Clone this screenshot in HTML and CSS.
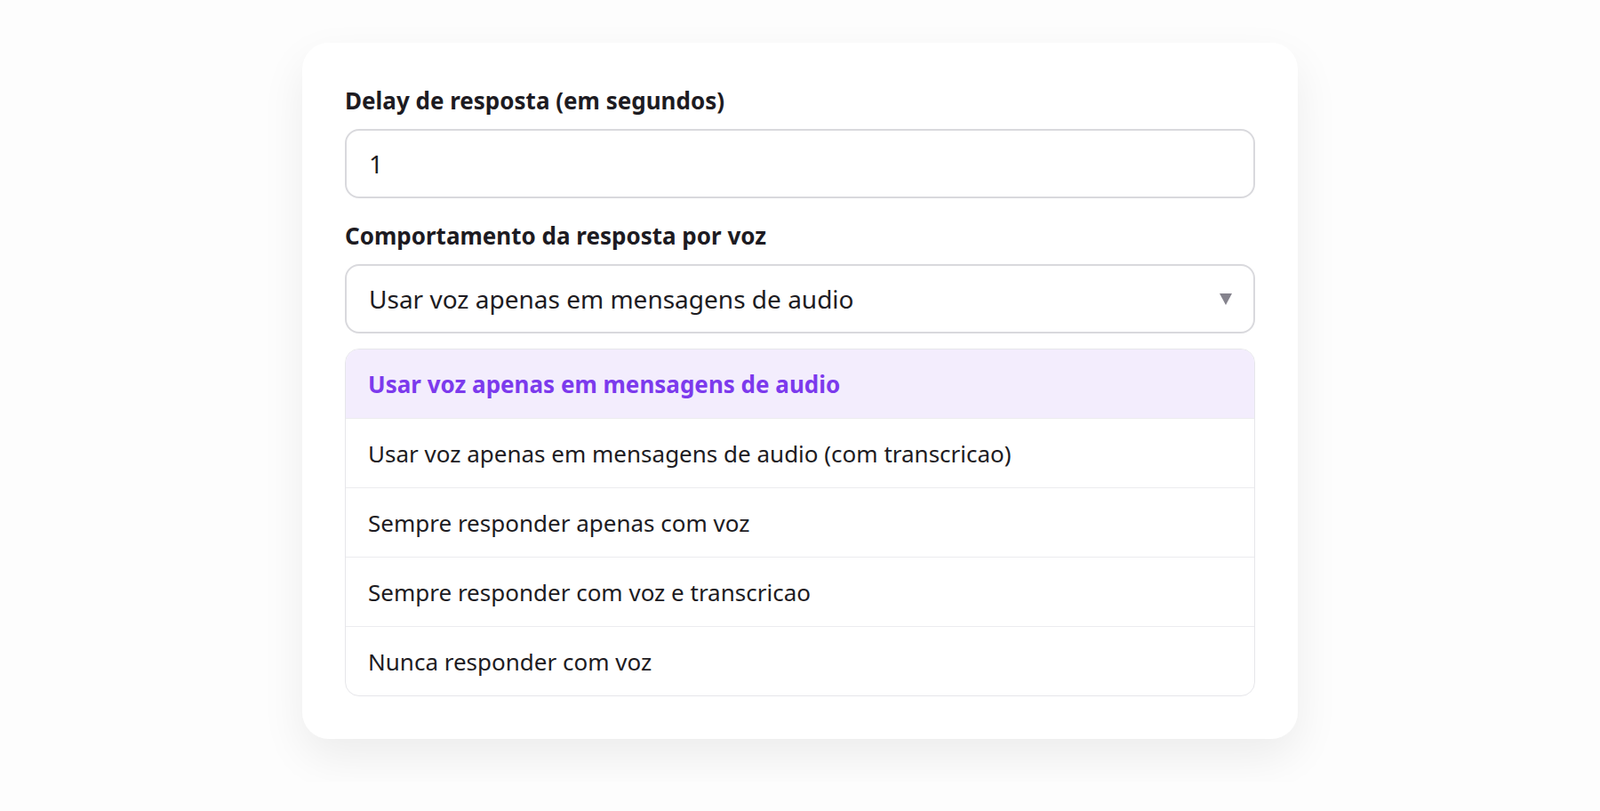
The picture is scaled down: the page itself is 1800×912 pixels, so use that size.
FILE: index.html
```html
<!DOCTYPE html>
<html>
<head>
    <title>Configurações de voz</title>
    <link rel="stylesheet" href="styles.css">
</head>
<body>
    <div class="card">
        <div class="field">
            <label class="field-label" for="delay">Delay de resposta (em segundos)</label>
            <input id="delay" class="text-input" type="text" value="1">
        </div>

        <div class="field">
            <div class="field-label">Comportamento da resposta por voz</div>
            <div class="select-box">
                <span>Usar voz apenas em mensagens de audio</span>
                <svg class="arrow" width="14" height="13" viewBox="0 0 14 13">
                    <path d="M0 0 H14 L7 13 Z" fill="#85838d"/>
                </svg>
            </div>
            <ul class="options">
                <li class="option selected">Usar voz apenas em mensagens de audio</li>
                <li class="option">Usar voz apenas em mensagens de audio (com transcricao)</li>
                <li class="option">Sempre responder apenas com voz</li>
                <li class="option">Sempre responder com voz e transcricao</li>
                <li class="option">Nunca responder com voz</li>
            </ul>
        </div>
    </div>
</body>
</html>
```

FILE: styles.css
```css
body {
    margin: 0;
    padding: 48px 0;
    background: #fdfdfd;
    font-family: 'Noto Sans', 'Open Sans', sans-serif;
    color: #1d1b22;
    display: flex;
    justify-content: center;
}

.card {
    width: 1120px;
    box-sizing: border-box;
    background: white;
    border-radius: 30px;
    padding: 48px;
    box-shadow: 0 20px 50px rgba(0,0,0,0.07);
}

.field + .field {
    margin-top: 25px;
}

.field-label {
    display: block;
    font-size: 26px;
    font-weight: 700;
    line-height: 34px;
    margin-bottom: 15px;
}

.text-input,
.select-box {
    width: 100%;
    height: 78px;
    box-sizing: border-box;
    border: 2px solid #d9d9dd;
    border-radius: 16px;
    padding: 0 25px;
    font-family: inherit;
    font-size: 28px;
    color: #1d1b22;
    background: white;
    outline: none;
}

.select-box {
    display: flex;
    align-items: center;
    justify-content: space-between;
}

.arrow {
    margin-right: -1px;
}

.options {
    list-style: none;
    margin: 17px 0 0;
    padding: 0;
    border: 1px solid #e6e6ea;
    border-radius: 16px;
    overflow: hidden;
}

.option {
    height: 77px;
    display: flex;
    align-items: center;
    padding: 0 25px;
    font-size: 26px;
    border-top: 1px solid #ececef;
}

.option:first-child {
    border-top: none;
}

.option.selected {
    background: #f3edfd;
    color: #7c3aed;
    font-weight: 700;
}
```
